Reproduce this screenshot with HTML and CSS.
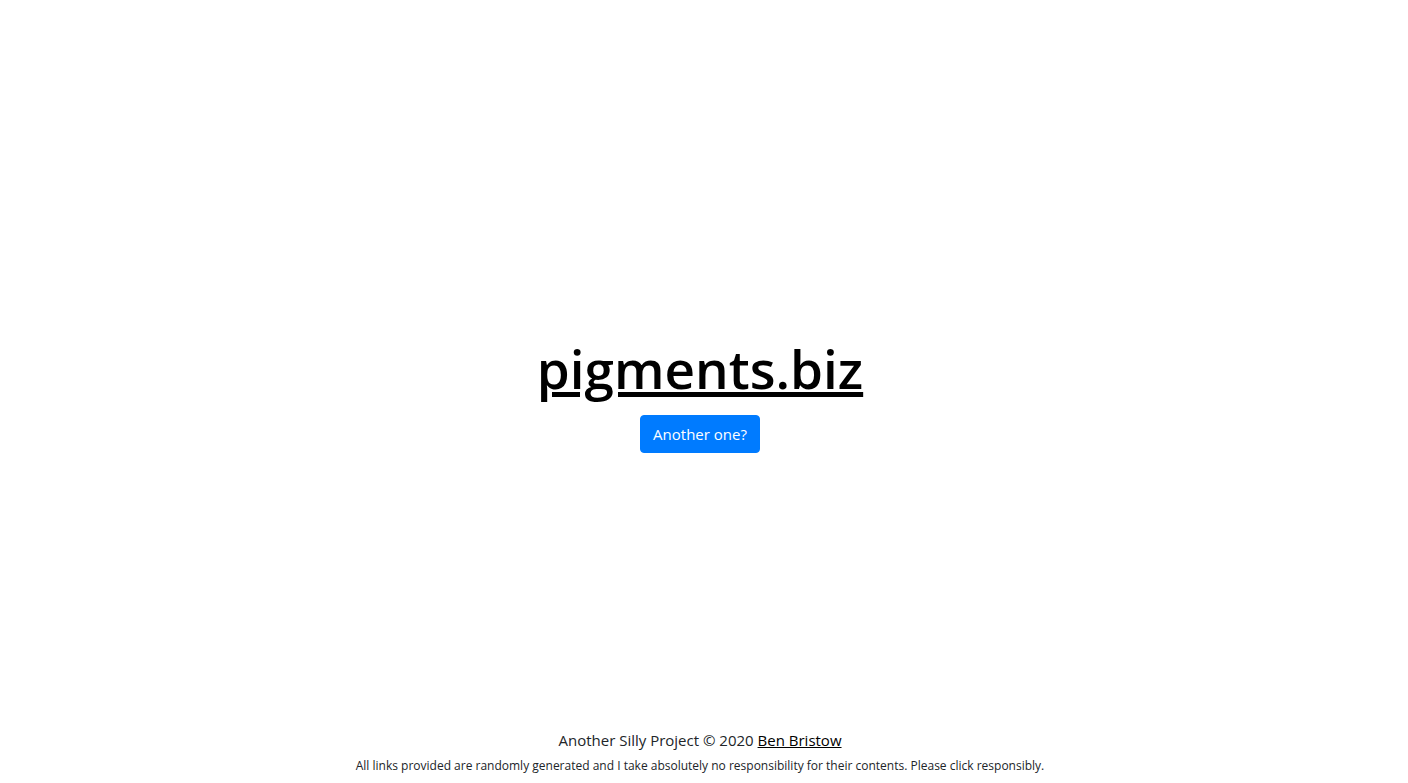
FILE: index.html
```html
<!DOCTYPE html>
<html lang="en">
<head>
<meta charset="utf-8">
<title>pigments.biz</title>
<link rel="stylesheet" href="styles.css">
</head>
<body class="page">
<main class="hero">
<h1 class="domain"><a class="link" href="#">pigments.biz</a></h1>
<button class="button" type="button">Another one?</button>
</main>
<footer class="footer">
<p class="credit">Another Silly Project © 2020 <a class="link" href="#">Ben Bristow</a></p>
<p class="note">All links provided are randomly generated and I take absolutely no responsibility for their contents. Please click responsibly.</p>
</footer>
</body>
</html>
```

FILE: styles.css
```css
* {
  box-sizing: border-box;
}

.page {
  display: flex;
  flex-direction: column;
  min-height: 100vh;
  margin: 0;
  padding-right: 8px;
  background: #fff;
  color: #212529;
  font-family: "Segoe UI", "Open Sans", "Noto Sans", sans-serif;
  font-size: 15px;
  line-height: 24px;
  text-align: center;
}

.hero {
  display: flex;
  flex: 1;
  flex-direction: column;
  align-items: center;
  justify-content: center;
  gap: 12px;
  padding-top: 59px;
}

.domain {
  margin: 0;
  font-size: 53px;
  font-weight: 600;
  line-height: 68px;
}

.link {
  color: #000;
  text-decoration: underline;
}

.domain .link {
  text-decoration-thickness: 5px;
  text-underline-offset: 3px;
}

.button {
  padding: 6px 12px;
  border: 1px solid #007bff;
  border-radius: 4px;
  background: #007bff;
  color: #fff;
  font: inherit;
  cursor: pointer;
}

.footer {
  display: flex;
  flex-direction: column;
  gap: 2px;
  padding: 0 16px 5px;
}

.credit,
.note {
  margin: 0;
}

.note {
  font-size: 12px;
}
```
